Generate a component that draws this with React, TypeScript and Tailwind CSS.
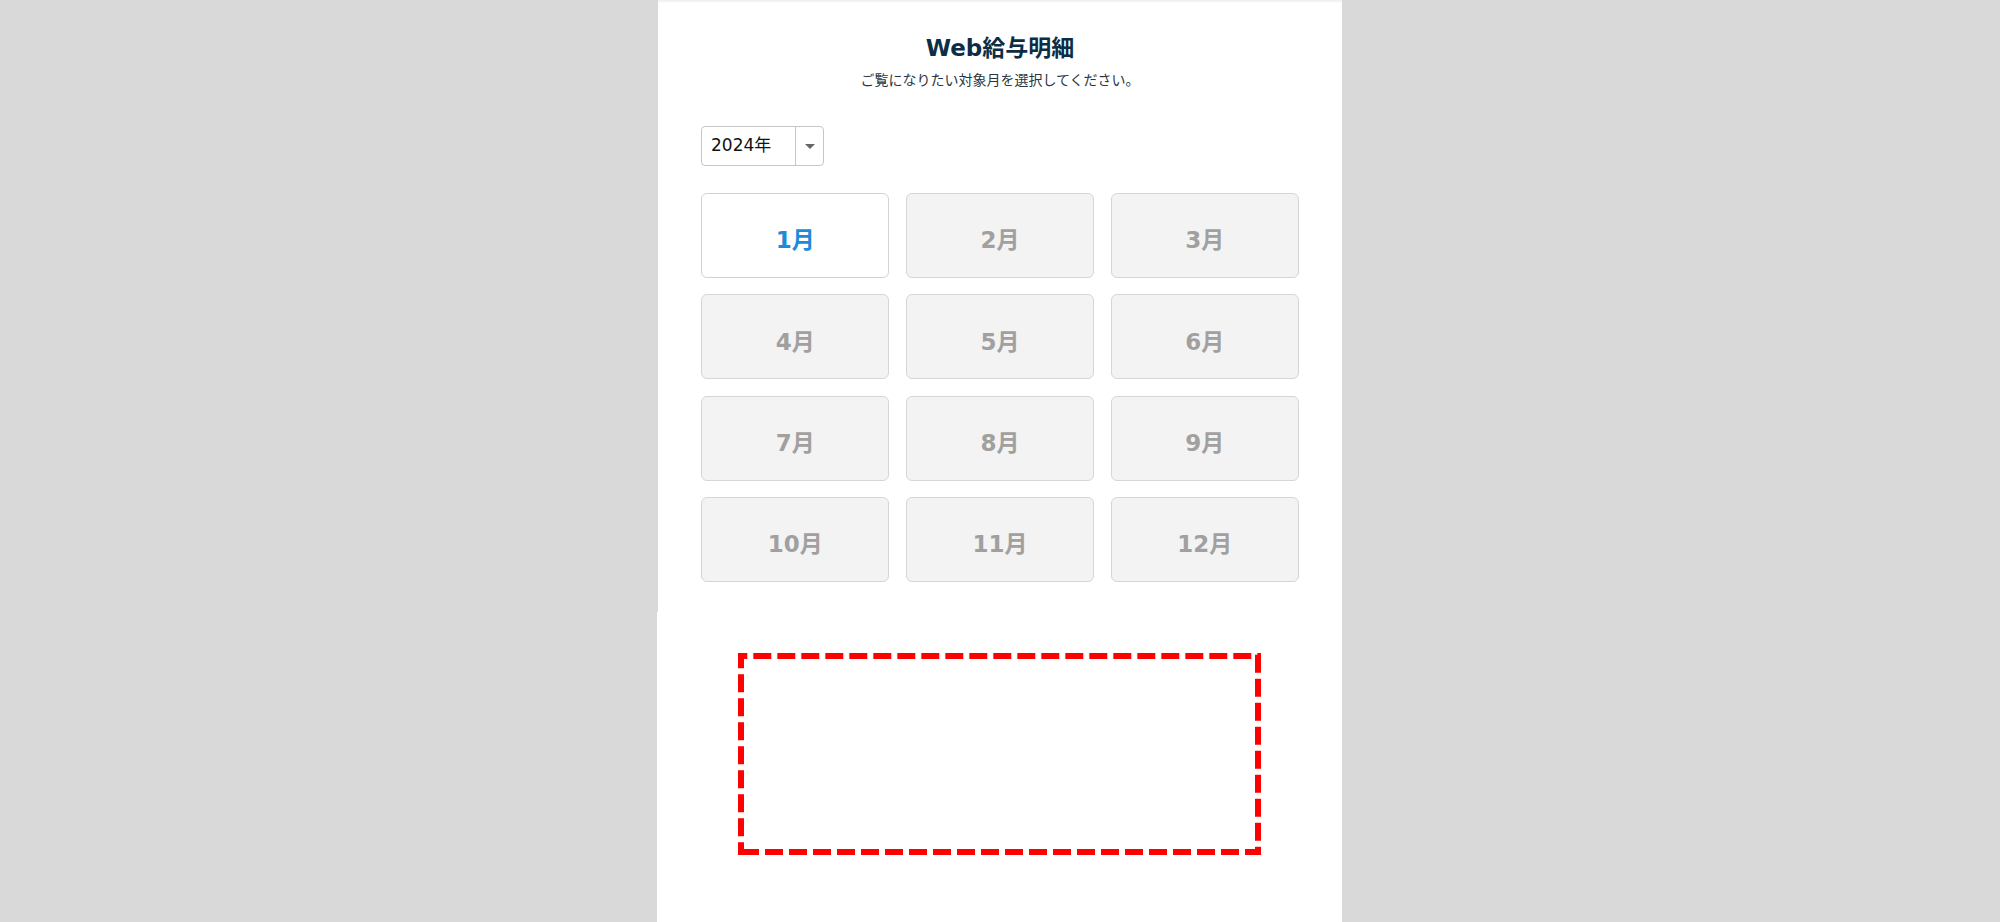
import React from "react";

const months = ["1月", "2月", "3月", "4月", "5月", "6月", "7月", "8月", "9月", "10月", "11月", "12月"];

function DashedFrame() {
  const red = "#ff0000";
  return (
    <svg className="absolute inset-0" width="523" height="202" viewBox="0 0 523 202">
      <line x1="0" y1="3" x2="523" y2="3" stroke={red} strokeWidth="6" strokeDasharray="18 6" strokeDashoffset="8.7" />
      <line x1="3" y1="0" x2="3" y2="202" stroke={red} strokeWidth="6" strokeDasharray="18 6" strokeDashoffset="2.7" />
      <line x1="520" y1="202" x2="520" y2="0" stroke={red} strokeWidth="6" strokeDasharray="18 6" strokeDashoffset="9.7" />
      <line x1="523" y1="199" x2="0" y2="199" stroke={red} strokeWidth="6" strokeDasharray="18 6" strokeDashoffset="2" />
    </svg>
  );
}

export default function App() {
  return (
    <div
      className="min-h-[922px] w-full bg-[#d9d9d9] flex justify-center"
      style={{ fontFamily: '"DejaVu Sans", "Noto Sans CJK JP", sans-serif' }}
    >
      <div className="w-[686px] flex flex-col">
        <div className="w-[684px] ml-[1px] bg-white relative pt-[34px] pb-[30px] flex flex-col items-center">
          <div className="absolute left-0 right-0 top-0 h-[3px] bg-gradient-to-b from-[#ececec] to-white" />
          <h1 className="h-[28px] leading-[28px] text-[23px] font-bold text-[#0c2d45]">Web給与明細</h1>
          <p className="mt-[8px] h-[20px] leading-[20px] text-[14px] text-[#2a3540]">
            ご覧になりたい対象月を選択してください。
          </p>
          <div className="w-[598px] mt-[36px]">
            <div className="w-[123px] h-[40px] border border-[#c6c6c6] rounded-[4px] flex items-stretch bg-white">
              <div className="flex-1 flex items-center pl-[9px] text-[17px] text-[#111]">2024年</div>
              <div className="w-[28px] border-l border-[#c6c6c6] flex items-center justify-center">
                <svg width="10" height="5" viewBox="0 0 10 5">
                  <path d="M0 0 L10 0 L5 5 Z" fill="#666" />
                </svg>
              </div>
            </div>
            <div className="mt-[27px] grid grid-cols-3 gap-x-[16.4px] gap-y-[16.4px]">
              {months.map((m, i) => (
                <button
                  key={m}
                  className={
                    i === 0
                      ? "h-[85px] rounded-[6px] border border-[#d3d3d3] bg-white flex items-center justify-center pt-[10px] text-[23px] font-bold text-[#1e8ad8]"
                      : "h-[85px] rounded-[6px] border border-[#d6d6d6] bg-[#f3f3f3] flex items-center justify-center pt-[10px] text-[23px] font-bold text-[#a2a09f]"
                  }
                >
                  {m}
                </button>
              ))}
            </div>
          </div>
        </div>
        <div className="w-[685px] flex-1 bg-white pt-[41px] min-h-[310px]">
          <div className="relative mx-auto w-[523px] h-[202px]">
            <DashedFrame />
          </div>
        </div>
      </div>
    </div>
  );
}
